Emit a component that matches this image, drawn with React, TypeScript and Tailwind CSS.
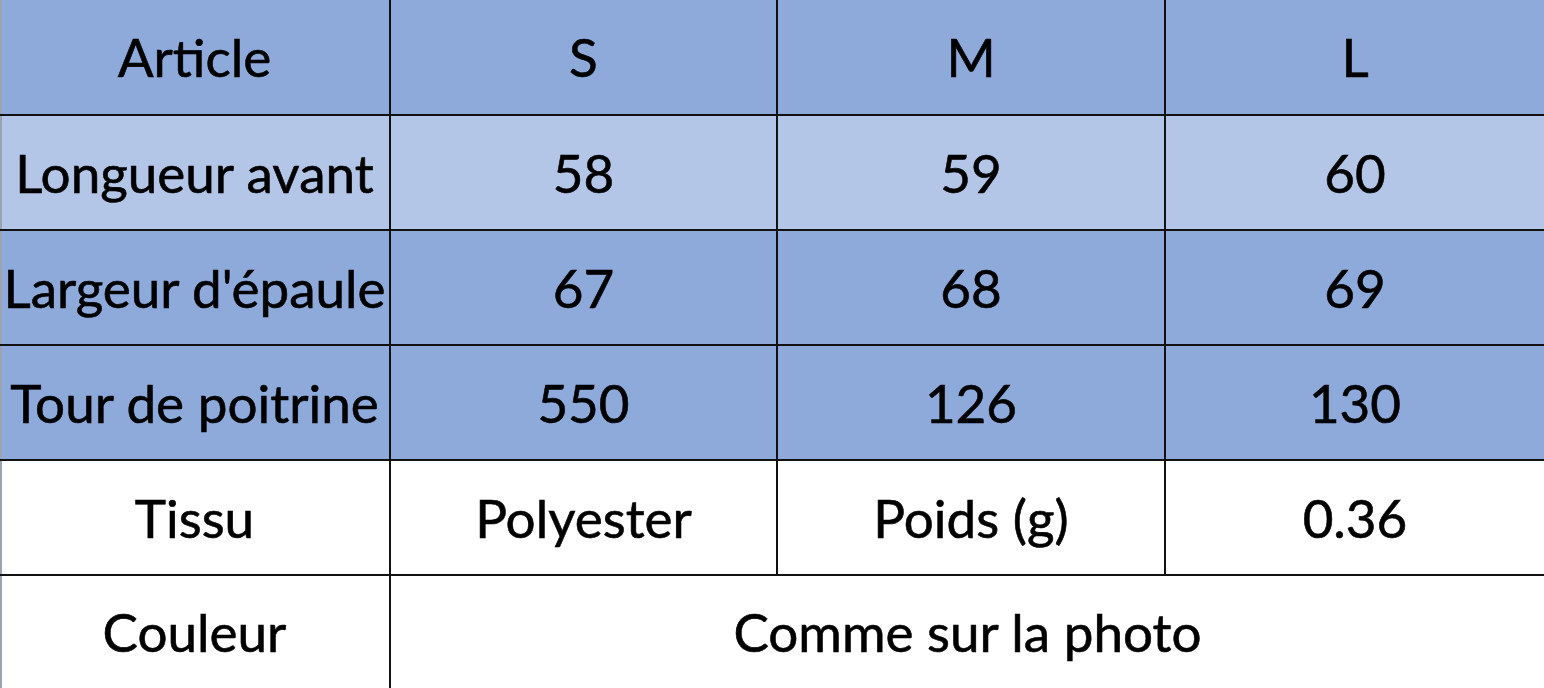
import React from "react";

const hdr = "bg-[#8eaadb]";
const light = "bg-[#b4c6e7]";
const white = "bg-white";

type Row = { bg: string; cells: string[] };

const rows: Row[] = [
  { bg: hdr, cells: ["Article", "S", "M", "L"] },
  { bg: light, cells: ["Longueur avant", "58", "59", "60"] },
  { bg: hdr, cells: ["Largeur d'épaule", "67", "68", "69"] },
  { bg: hdr, cells: ["Tour de poitrine", "550", "126", "130"] },
  { bg: white, cells: ["Tissu", "Polyester", "Poids (g)", "0.36"] },
];

export default function App() {
  return (
    <div
      className="w-[1544px] h-[688px] overflow-hidden bg-[#111] grid grid-cols-[389px_385px_386px_378px] grid-rows-[114px_113px_113px_113px_113px_112px] gap-[2px] text-[53px] text-black"
      style={{ fontFamily: "Lato, 'Open Sans', sans-serif" }}
    >
      {rows.map((r, i) =>
        r.cells.map((c, j) => (
          <div
            key={`${i}-${j}`}
            className={`${r.bg} flex items-center justify-center whitespace-nowrap [-webkit-text-stroke:0.6px_black] ${j === 0 ? "shadow-[inset_2px_0_0_#9ca3af]" : ""}`}
          >
            {c}
          </div>
        ))
      )}
      <div className="bg-white flex items-center justify-center [-webkit-text-stroke:0.6px_black] shadow-[inset_2px_0_0_#9ca3af]">Couleur</div>
      <div className="bg-white col-span-3 flex items-center justify-center [-webkit-text-stroke:0.6px_black]">Comme sur la photo</div>
    </div>
  );
}
